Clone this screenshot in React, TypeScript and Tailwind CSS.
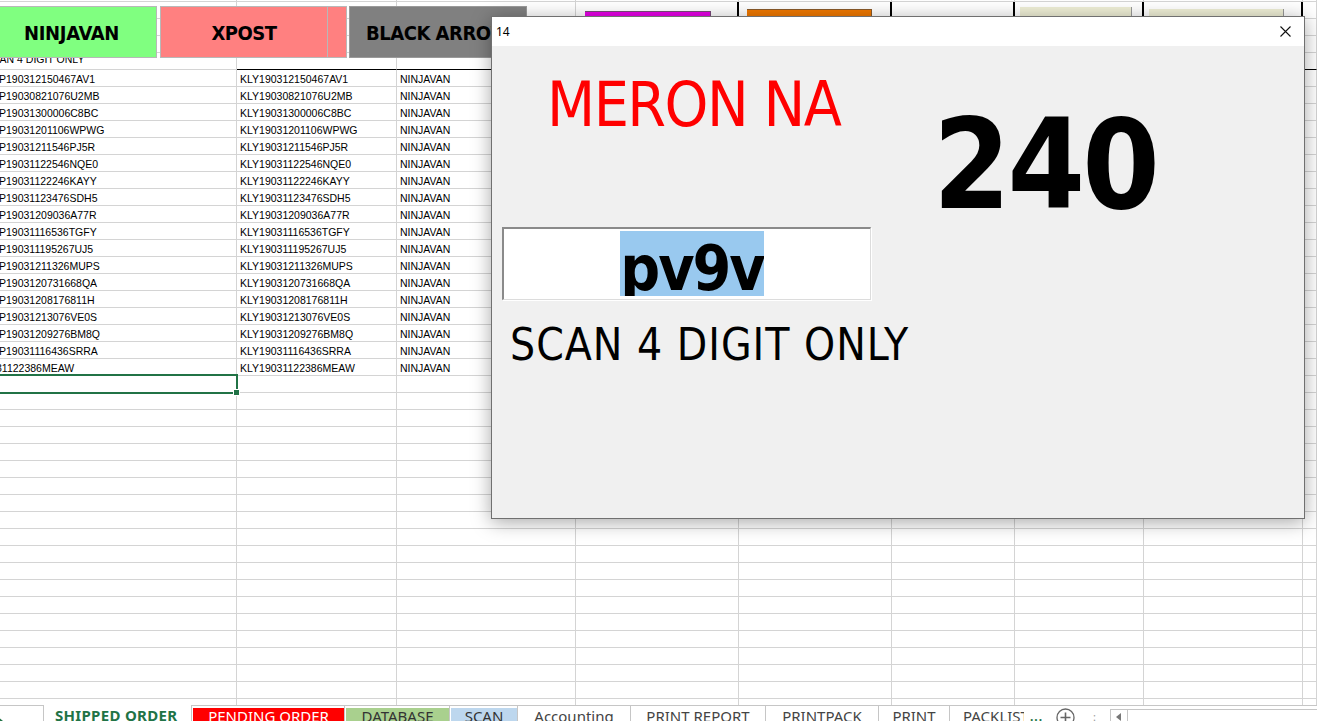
import React from 'react'

const colWidths = 'grid-cols-[237px_160px_179px_163px_153px_123px_129px_159px_1fr]'

const shipped = [
  ['P190312150467AV1', 'KLY190312150467AV1'],
  ['P19030821076U2MB', 'KLY19030821076U2MB'],
  ['P19031300006C8BC', 'KLY19031300006C8BC'],
  ['P19031201106WPWG', 'KLY19031201106WPWG'],
  ['P19031211546PJ5R', 'KLY19031211546PJ5R'],
  ['P19031122546NQE0', 'KLY19031122546NQE0'],
  ['P19031122246KAYY', 'KLY19031122246KAYY'],
  ['P19031123476SDH5', 'KLY19031123476SDH5'],
  ['P19031209036A77R', 'KLY19031209036A77R'],
  ['P19031116536TGFY', 'KLY19031116536TGFY'],
  ['P190311195267UJ5', 'KLY190311195267UJ5'],
  ['P19031211326MUPS', 'KLY19031211326MUPS'],
  ['P1903120731668QA', 'KLY1903120731668QA'],
  ['P19031208176811H', 'KLY19031208176811H'],
  ['P19031213076VE0S', 'KLY19031213076VE0S'],
  ['P19031209276BM8Q', 'KLY19031209276BM8Q'],
  ['P19031116436SRRA', 'KLY19031116436SRRA'],
  ['31122386MEAW', 'KLY19031122386MEAW'],
]

const FIRST_DATA_ROW = 5
const ROWS = 43

function Cell({ row, col }: { row: number; col: number }) {
  const dataIndex = row - FIRST_DATA_ROW
  const item = shipped[dataIndex]
  let text = ''
  let shift = ''
  if (item && col === 0) {
    text = item[0]
    shift = dataIndex === shipped.length - 1 ? '-ml-[4px]' : '-ml-[1px]'
  }
  if (item && col === 1) text = item[1]
  if (item && col === 2) text = 'NINJAVAN'
  if (row === 4 && col === 0) {
    text = 'SCAN 4 DIGIT ONLY'
    shift = '-ml-[15px] -mt-[3px]'
  }

  const headerLine = row === 4 && col > 0 ? 'border-b-black' : ''
  const thickSide = row >= 1 && row <= 4 && col >= 3 && col <= 7 ? 'border-r-2 border-r-black' : ''

  return (
    <div
      className={`h-[17px] overflow-hidden whitespace-nowrap border-b border-r border-[#d4d4d4] pt-[3px] text-[10.5px] leading-[13px] text-black ${
        col === 0 ? '' : 'pl-[3px]'
      } ${headerLine} ${thickSide}`}
    >
      {text && <span className={`block ${shift}`}>{text}</span>}
    </div>
  )
}

function Sheet() {
  return (
    <div className="h-[705px] overflow-hidden">
      <div className="-mt-[15px]">
        {Array.from({ length: ROWS }, (_, row) => (
          <div key={row} className={`grid ${colWidths}`}>
            {Array.from({ length: 9 }, (_, col) => (
              <Cell key={col} row={row} col={col} />
            ))}
          </div>
        ))}
      </div>
    </div>
  )
}

function SheetTabs() {
  const plain = [
    { label: 'Accounting', w: 'w-[113px]' },
    { label: 'PRINT REPORT', w: 'w-[135px]' },
    { label: 'PRINTPACK', w: 'w-[113px]' },
    { label: 'PRINT', w: 'w-[71px]' },
  ]
  return (
    <div className="flex h-[16px] bg-white font-['Noto_Sans',sans-serif] text-[15px] leading-[14px]">
      <div className="relative w-[44px] border-r border-t border-[#c6c6c6]">
        <svg className="absolute -left-[2px] top-[11px]" width="6" height="8" viewBox="0 0 6 8">
          <path d="M0 0 L5 4 L0 8 Z" fill="#217346" />
        </svg>
      </div>
      <div className="w-[147px] whitespace-nowrap pl-[11px] pt-[3px] font-bold tracking-[0.3px] text-[#217346]">SHIPPED ORDER</div>
      <div className="flex flex-1 whitespace-nowrap border-l border-t border-[#c6c6c6]">
        <div className="w-[153px] border-r border-[#c6c6c6] pl-[1px] pt-[2px]">
          <div className="h-full bg-[#ff0000] pt-[1px] text-center text-white">PENDING ORDER</div>
        </div>
        <div className="w-[105px] border-r border-[#c6c6c6] pl-[1px] pt-[2px]">
          <div className="h-full bg-[#a9d08e] pt-[1px] text-center text-[#333]">DATABASE</div>
        </div>
        <div className="w-[68px] border-r border-[#c6c6c6] pl-[1px] pt-[2px]">
          <div className="h-full bg-[#bdd7ee] pt-[1px] text-center text-[#333]">SCAN</div>
        </div>
        {plain.map((t) => (
          <div key={t.label} className={`${t.w} border-r border-[#c6c6c6] pt-[3px] text-center text-[#444]`}>
            {t.label}
          </div>
        ))}
        <div className="w-[74px] overflow-hidden pl-[13px] pt-[3px] text-[#444]">PACKLIST</div>
        <div className="w-[25px] pl-[6px] pt-[4px] text-[12px] font-bold tracking-[1px] text-[#217346]">...</div>
        <div className="ml-[7px] pt-[2px]">
          <svg width="19" height="19" viewBox="0 0 19 19">
            <circle cx="9.5" cy="9.5" r="8.5" fill="none" stroke="#666" strokeWidth="1.3" />
            <path d="M9.5 4.5 V14.5 M4.5 9.5 H14.5" stroke="#666" strokeWidth="1.6" />
          </svg>
        </div>
        <div className="ml-[18px] pt-[4px] text-[11px] text-[#999]">:</div>
        <div className="ml-[14px] mt-[3px] flex w-[18px] justify-center border-l border-r border-t border-[#c6c6c6] pt-[3px]">
          <svg width="5" height="8" viewBox="0 0 5 8">
            <path d="M5 0 L0 4 L5 8 Z" fill="#777" />
          </svg>
        </div>
        <div className="mt-[3px] flex-1 border-t border-[#c6c6c6]" />
      </div>
    </div>
  )
}

function Shapes() {
  return (
    <>
      <div className="absolute -left-[14px] top-[6px] flex h-[52px] w-[171px] items-center justify-center border border-[#b8b8b8] bg-[#80ff80] pt-[2px] font-['DejaVu_Sans',sans-serif] text-[20px] font-bold tracking-[-0.3px] text-black [font-stretch:condensed]">
        NINJAVAN
      </div>
      <div className="absolute left-[326px] top-[6px] h-[52px] w-[21px] border border-[#b8b8b8] bg-[#ff8080]" />
      <div className="absolute left-[160px] top-[6px] flex h-[52px] w-[168px] items-center justify-center border border-[#b8b8b8] bg-[#ff8080] pt-[1px] font-['DejaVu_Sans',sans-serif] text-[20px] font-bold tracking-[-0.5px] text-black [font-stretch:condensed]">
        XPOST
      </div>
      <div className="absolute left-[349px] top-[6px] flex h-[52px] w-[178px] items-center justify-center whitespace-nowrap border border-[#9a9a9a] bg-[#808080] pt-[2px] font-['DejaVu_Sans',sans-serif] text-[20px] font-bold tracking-[-0.5px] text-black [font-stretch:condensed]">
        BLACK ARROW
      </div>
      <div className="absolute left-[585px] top-[11px] h-[20px] w-[126px] border-r border-t border-[#7a4a7a] bg-[#e600e6]" />
      <div className="absolute left-[747px] top-[9px] h-[20px] w-[125px] border-r border-t border-[#8a5a2a] bg-[#ef7800]" />
      <div className="absolute left-[1020px] top-[7px] h-[20px] w-[112px] border-r border-[#999] bg-[#efefd6]" />
      <div className="absolute left-[1149px] top-[9px] h-[20px] w-[135px] border-r border-[#999] bg-[#efefd6]" />

      {/* selected cell */}
      <div className="absolute -left-[3px] top-[374px] h-[20px] w-[241px] border-2 border-[#217346]" />
      <div className="absolute left-[233px] top-[389px] h-[7px] w-[7px] border border-white bg-[#217346]" />
    </>
  )
}

function ScanDialog() {
  return (
    <div className="absolute left-[491px] top-[16px] flex h-[503px] w-[814px] flex-col border border-[#707070] bg-[#f0f0f0] shadow-[0_3px_18px_rgba(0,0,0,0.35)]">
      <div className="flex h-[29px] items-center justify-between bg-white pl-[4px] pr-[13px] font-['Noto_Sans',sans-serif] text-[12px] text-black">
        <span>14</span>
        <svg width="11" height="11" viewBox="0 0 11 11">
          <path d="M0.5 0.5 L10.5 10.5 M10.5 0.5 L0.5 10.5" stroke="#111" strokeWidth="1.1" />
        </svg>
      </div>
      <div className="flex flex-1 font-['DejaVu_Sans',sans-serif] text-black [font-stretch:condensed]">
        <div className="flex w-[379px] flex-col pl-[10px]">
          <div className="ml-[45px] mt-[28px] whitespace-nowrap text-[62px] leading-none tracking-[-1.5px] text-[#ff0000]">
            MERON NA
          </div>
          <div className="mt-[91px] flex h-[73px] w-[369px] justify-center overflow-hidden border-b border-l-2 border-r border-t-2 border-b-[#dcdcdc] border-l-[#8a8a8a] border-r-[#dcdcdc] border-t-[#8a8a8a] bg-white pl-[10px] shadow-[1px_1px_0_#ffffff]">
            <span className="mt-[2px] inline-block h-[65px] overflow-hidden bg-[#99c9ef] text-[62px] font-bold leading-[75px] tracking-[-2px]">
              pv9v
            </span>
          </div>
          <div className="ml-[8px] mt-[23px] whitespace-nowrap text-[44px] leading-none tracking-[1px]">SCAN 4 DIGIT ONLY</div>
        </div>
        <div className="ml-[62px] mt-[57px] text-[124px] font-bold leading-none tracking-[-3px]">240</div>
      </div>
    </div>
  )
}

export default function App() {
  return (
    <div className="relative h-[721px] w-[1317px] overflow-hidden bg-white font-['Liberation_Sans',Arial,sans-serif]">
      <Sheet />
      <SheetTabs />
      <Shapes />
      <ScanDialog />
    </div>
  )
}
